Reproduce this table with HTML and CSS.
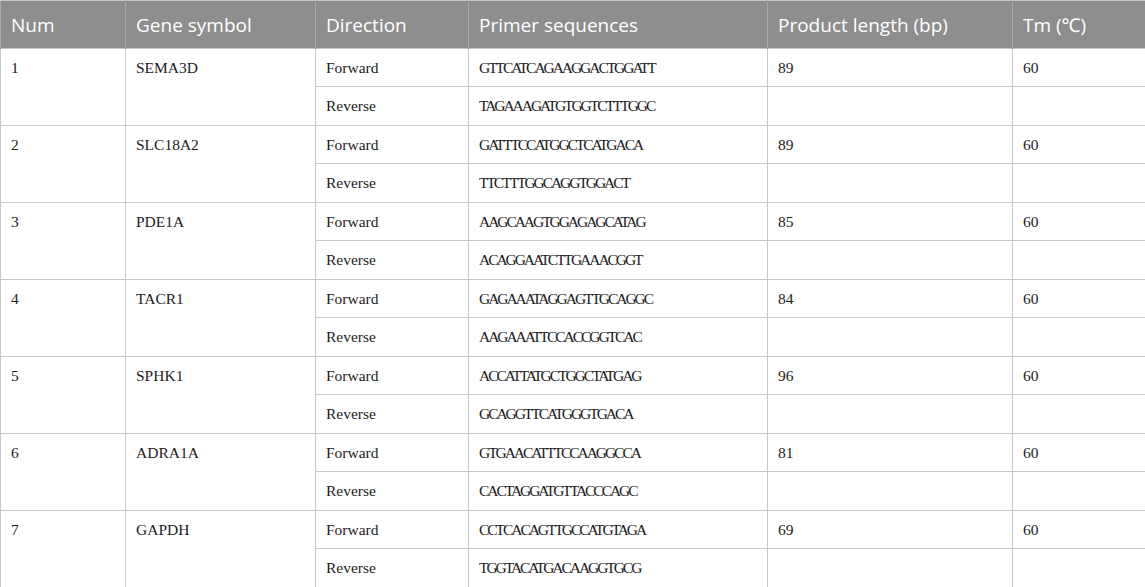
FILE: index.html
```html
<!DOCTYPE html>
<html>
<head>
<meta charset="utf-8">
<link rel="stylesheet" href="styles.css">
</head>
<body>
<table class="primers">
  <colgroup>
    <col class="c-num"><col class="c-gene"><col class="c-dir"><col class="c-seq"><col class="c-len"><col class="c-tm">
  </colgroup>
  <thead>
    <tr><th>Num</th><th>Gene symbol</th><th>Direction</th><th>Primer sequences</th><th>Product length (bp)</th><th>Tm (℃)</th></tr>
  </thead>
  <tbody>
    <tr class="fw"><td rowspan="2" class="merged">1</td><td rowspan="2" class="merged">SEMA3D</td><td>Forward</td><td class="seq">GTTCATCAGAAGGACTGGATT</td><td>89</td><td>60</td></tr>
    <tr class="rv"><td>Reverse</td><td class="seq">TAGAAAGATGTGGTCTTTGGC</td><td></td><td></td></tr>
    <tr class="fw"><td rowspan="2" class="merged">2</td><td rowspan="2" class="merged">SLC18A2</td><td>Forward</td><td class="seq">GATTTCCATGGCTCATGACA</td><td>89</td><td>60</td></tr>
    <tr class="rv"><td>Reverse</td><td class="seq">TTCTTTGGCAGGTGGACT</td><td></td><td></td></tr>
    <tr class="fw"><td rowspan="2" class="merged">3</td><td rowspan="2" class="merged">PDE1A</td><td>Forward</td><td class="seq">AAGCAAGTGGAGAGCATAG</td><td>85</td><td>60</td></tr>
    <tr class="rv"><td>Reverse</td><td class="seq">ACAGGAATCTTGAAACGGT</td><td></td><td></td></tr>
    <tr class="fw"><td rowspan="2" class="merged">4</td><td rowspan="2" class="merged">TACR1</td><td>Forward</td><td class="seq">GAGAAATAGGAGTTGCAGGC</td><td>84</td><td>60</td></tr>
    <tr class="rv"><td>Reverse</td><td class="seq">AAGAAATTCCACCGGTCAC</td><td></td><td></td></tr>
    <tr class="fw"><td rowspan="2" class="merged">5</td><td rowspan="2" class="merged">SPHK1</td><td>Forward</td><td class="seq">ACCATTATGCTGGCTATGAG</td><td>96</td><td>60</td></tr>
    <tr class="rv"><td>Reverse</td><td class="seq">GCAGGTTCATGGGTGACA</td><td></td><td></td></tr>
    <tr class="fw"><td rowspan="2" class="merged">6</td><td rowspan="2" class="merged">ADRA1A</td><td>Forward</td><td class="seq">GTGAACATTTCCAAGGCCA</td><td>81</td><td>60</td></tr>
    <tr class="rv"><td>Reverse</td><td class="seq">CACTAGGATGTTACCCAGC</td><td></td><td></td></tr>
    <tr class="fw"><td rowspan="2" class="merged">7</td><td rowspan="2" class="merged">GAPDH</td><td>Forward</td><td class="seq">CCTCACAGTTGCCATGTAGA</td><td>69</td><td>60</td></tr>
    <tr class="rv"><td>Reverse</td><td class="seq">TGGTACATGACAAGGTGCG</td><td></td><td></td></tr>
  </tbody>
</table>
</body>
</html>
```

FILE: styles.css
```css
html, body {
  margin: 0;
  padding: 0;
  background: #ffffff;
}

.primers {
  border-collapse: collapse;
  table-layout: fixed;
  width: 1145px;
}

.c-num { width: 125px; }
.c-gene { width: 190px; }
.c-dir { width: 153px; }
.c-seq { width: 299px; }
.c-len { width: 245px; }
.c-tm { width: 133px; }

.primers th {
  height: 47px;
  background: #8e8e8e;
  color: #ffffff;
  font-family: "Open Sans", "Noto Sans", sans-serif;
  font-weight: 400;
  font-size: 19px;
  text-align: left;
  padding: 0 10px;
  border-top: 1px solid #c6c6c6;
  border-left: 1px solid #a9a9a9;
  border-right: 1px solid #a9a9a9;
  vertical-align: middle;
  white-space: nowrap;
}

.primers td {
  font-family: "Liberation Serif", "Times New Roman", serif;
  font-size: 15.5px;
  color: #1c1c1c;
  padding: 0 10px;
  border: 1px solid #c8c8c8;
  vertical-align: middle;
  white-space: nowrap;
}

.primers tr.fw td { height: 37px; }
.primers tr.rv td { height: 38px; }

.primers td.merged {
  vertical-align: top;
  padding-top: 10px;
}

.primers td.seq {
  letter-spacing: -2.05px;
}
```
